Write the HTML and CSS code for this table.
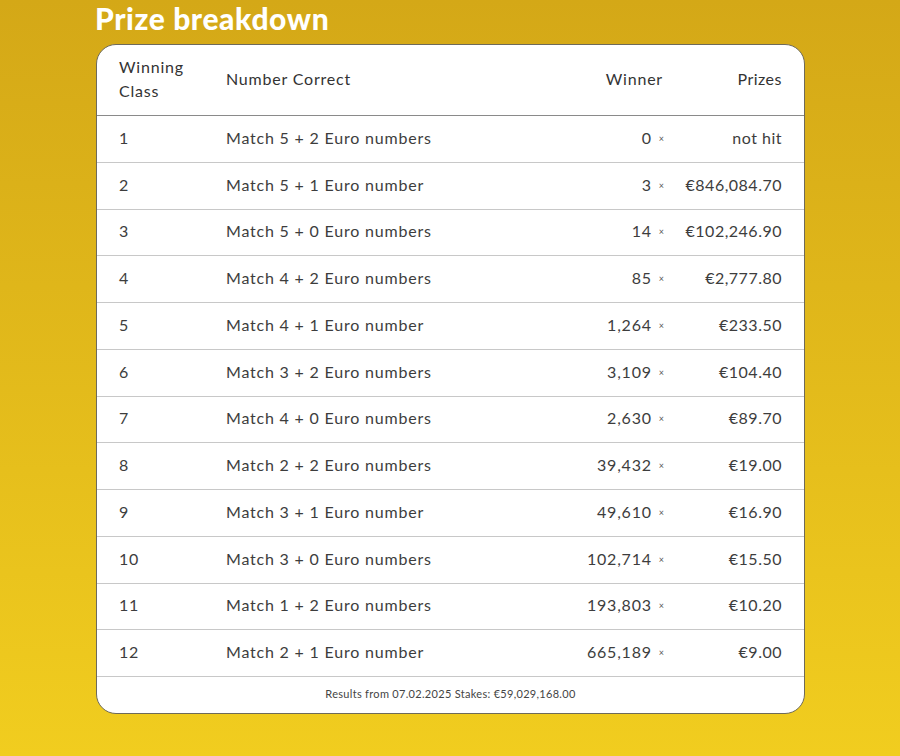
FILE: index.html
```html
<!DOCTYPE html>
<html>
<head>
<meta charset="utf-8">
<link rel="stylesheet" href="styles.css">
</head>
<body>
<main class="page">
  <h1 class="title">Prize breakdown</h1>
  <div class="card">
    <table class="prizes">
      <colgroup>
        <col class="w-class">
        <col class="w-match">
        <col class="w-win">
        <col class="w-prize">
      </colgroup>
      <thead>
        <tr>
          <th class="c-class">Winning<br>Class</th>
          <th class="c-match">Number Correct</th>
          <th class="c-win">Winner</th>
          <th class="c-prize">Prizes</th>
        </tr>
      </thead>
      <tbody>
        <tr><td class="c-class">1</td><td class="c-match">Match 5 + 2 Euro numbers</td><td class="c-win">0 <span class="x">×</span></td><td class="c-prize">not hit</td></tr>
        <tr><td class="c-class">2</td><td class="c-match">Match 5 + 1 Euro number</td><td class="c-win">3 <span class="x">×</span></td><td class="c-prize">€846,084.70</td></tr>
        <tr><td class="c-class">3</td><td class="c-match">Match 5 + 0 Euro numbers</td><td class="c-win">14 <span class="x">×</span></td><td class="c-prize">€102,246.90</td></tr>
        <tr><td class="c-class">4</td><td class="c-match">Match 4 + 2 Euro numbers</td><td class="c-win">85 <span class="x">×</span></td><td class="c-prize">€2,777.80</td></tr>
        <tr><td class="c-class">5</td><td class="c-match">Match 4 + 1 Euro number</td><td class="c-win">1,264 <span class="x">×</span></td><td class="c-prize">€233.50</td></tr>
        <tr><td class="c-class">6</td><td class="c-match">Match 3 + 2 Euro numbers</td><td class="c-win">3,109 <span class="x">×</span></td><td class="c-prize">€104.40</td></tr>
        <tr><td class="c-class">7</td><td class="c-match">Match 4 + 0 Euro numbers</td><td class="c-win">2,630 <span class="x">×</span></td><td class="c-prize">€89.70</td></tr>
        <tr><td class="c-class">8</td><td class="c-match">Match 2 + 2 Euro numbers</td><td class="c-win">39,432 <span class="x">×</span></td><td class="c-prize">€19.00</td></tr>
        <tr><td class="c-class">9</td><td class="c-match">Match 3 + 1 Euro number</td><td class="c-win">49,610 <span class="x">×</span></td><td class="c-prize">€16.90</td></tr>
        <tr><td class="c-class">10</td><td class="c-match">Match 3 + 0 Euro numbers</td><td class="c-win">102,714 <span class="x">×</span></td><td class="c-prize">€15.50</td></tr>
        <tr><td class="c-class">11</td><td class="c-match">Match 1 + 2 Euro numbers</td><td class="c-win">193,803 <span class="x">×</span></td><td class="c-prize">€10.20</td></tr>
        <tr><td class="c-class">12</td><td class="c-match">Match 2 + 1 Euro number</td><td class="c-win">665,189 <span class="x">×</span></td><td class="c-prize">€9.00</td></tr>
      </tbody>
    </table>
    <p class="footer">Results from 07.02.2025 Stakes: €59,029,168.00</p>
  </div>
</main>
</body>
</html>
```

FILE: styles.css
```css
html, body {
  margin: 0;
  padding: 0;
}
body {
  width: 900px;
  height: 756px;
  overflow: hidden;
  background: linear-gradient(180deg, #d4a817 0%, #f1cd1f 100%);
  font-family: "Lato", "Open Sans", sans-serif;
  color: #3a3a3a;
}
.page {
  width: 709px;
  margin: 0 auto;
  padding-left: 1px;
}
.title {
  margin: 0 0 0 -1px;
  height: 44px;
  padding: 0;
  box-sizing: border-box;
  font-family: "Lato", sans-serif;
  font-weight: 900;
  font-size: 30px;
  line-height: 36px;
  color: #ffffff;
  letter-spacing: 0.6px;
}
.card {
  background: #ffffff;
  border: 1px solid #6e6a5a;
  border-radius: 20px;
  overflow: hidden;
  box-sizing: border-box;
}
.prizes {
  width: 100%;
  border-collapse: collapse;
  table-layout: fixed;
  font-size: 16px;
  letter-spacing: 0.8px;
}
.w-class { width: 107px; }
.w-win { width: 170px; }
.w-prize { width: 137px; }
.prizes th {
  font-weight: 400;
  height: 68px;
  line-height: 24px;
  padding: 0 0 2px 22px;
  border-bottom: 1px solid #8a8a8a;
  color: #333;
  white-space: nowrap;
}
.prizes td {
  height: 42.75px;
  padding: 0 0 3px 22px;
  border-bottom: 1px solid #c8c8c8;
  color: #3d3d3d;
  white-space: nowrap;
}
.c-class,
.c-match {
  text-align: left;
}
.prizes .c-win {
  text-align: right;
  padding-left: 0;
  padding-right: 3px;
}
.prizes th.c-win {
  padding-right: 4px;
}
.prizes .c-prize {
  text-align: right;
  padding-left: 0;
  padding-right: 22px;
  letter-spacing: 0.5px;
}
.x {
  font-size: 9px;
  color: #555;
  vertical-align: 2px;
  margin-left: 2px;
  letter-spacing: 0;
}
.footer {
  margin: 0;
  height: 36px;
  line-height: 33px;
  text-align: center;
  font-size: 11px;
  letter-spacing: 0.3px;
  color: #444;
}
```
